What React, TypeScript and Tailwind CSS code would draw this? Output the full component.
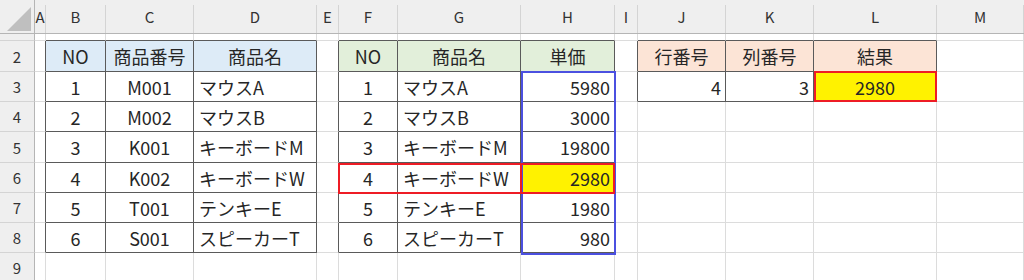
const COLS = ["A", "B", "C", "D", "E", "F", "G", "H", "I", "J", "K", "L", "M"]
const ROWS = [1, 2, 3, 4, 5, 6, 7, 8, 9]

// sheet contents keyed by cell address
const CELLS: Record<string, string> = {
  B2: "NO", C2: "商品番号", D2: "商品名", F2: "NO", G2: "商品名", H2: "単価", J2: "行番号", K2: "列番号", L2: "結果",
  B3: "1", C3: "M001", D3: "マウスA", F3: "1", G3: "マウスA", H3: "5980", J3: "4", K3: "3", L3: "2980",
  B4: "2", C4: "M002", D4: "マウスB", F4: "2", G4: "マウスB", H4: "3000",
  B5: "3", C5: "K001", D5: "キーボードM", F5: "3", G5: "キーボードM", H5: "19800",
  B6: "4", C6: "K002", D6: "キーボードW", F6: "4", G6: "キーボードW", H6: "2980",
  B7: "5", C7: "T001", D7: "テンキーE", F7: "5", G7: "テンキーE", H7: "1980",
  B8: "6", C8: "S001", D8: "スピーカーT", F8: "6", G8: "スピーカーT", H8: "980",
}

const TABLES = [
  { c0: "B", c1: "D", r0: 2, r1: 8 },
  { c0: "F", c1: "H", r0: 2, r1: 8 },
  { c0: "J", c1: "L", r0: 2, r1: 3 },
]

const inTable = (col: string, row: number) => {
  const ci = COLS.indexOf(col)
  return TABLES.some(
    (t) => ci >= COLS.indexOf(t.c0) && ci <= COLS.indexOf(t.c1) && row >= t.r0 && row <= t.r1
  )
}

const fillFor = (col: string, row: number) => {
  if (row === 2 && "BCD".includes(col)) return "bg-[#ddebf7]"
  if (row === 2 && "FGH".includes(col)) return "bg-[#e2efda]"
  if (row === 2 && "JKL".includes(col)) return "bg-[#fce4d6]"
  if ((col === "H" && row === 6) || (col === "L" && row === 3)) return "bg-[#fff200]"
  return "bg-white"
}

const alignFor = (col: string, row: number) => {
  if (row === 2 || "BCFL".includes(col)) return "justify-center"
  if ("DG".includes(col)) return "justify-start pl-[5px]"
  return "justify-end pr-[4px]"
}

function Cell({ col, row }: { col: string; row: number }) {
  const ci = COLS.indexOf(col)
  const next = COLS[ci + 1]
  const darkRight = inTable(col, row) || (next ? inTable(next, row) : false)
  const darkBottom = inTable(col, row) || inTable(col, row + 1)
  const text = CELLS[`${col}${row}`]

  return (
    <div
      className={`flex items-center overflow-hidden whitespace-nowrap border-r border-b ${
        darkRight ? "border-r-[#5a5a5a]" : "border-r-[#dcdcdc]"
      } ${darkBottom ? "border-b-[#5a5a5a]" : "border-b-[#dcdcdc]"} ${fillFor(col, row)} ${alignFor(col, row)}`}
    >
      {text && <span className="text-[18px] leading-none text-[#262626]">{text}</span>}
    </div>
  )
}

export default function App() {
  return (
    <div className="relative h-[280px] w-[1024px] overflow-hidden bg-white font-['Noto_Sans_CJK_JP',sans-serif]">
      <div className="grid h-full grid-cols-[35px_11px_60px_88px_123px_22px_59px_123px_94px_23px_88px_88px_123px_1fr] grid-rows-[34px_7px_31px_30px_30px_31px_30px_30px_30px_30px]">
        {/* corner */}
        <div className="flex items-end justify-end border-r border-b border-[#b5b5b5] bg-[#efefef] pr-[3px] pb-[2px]">
          <svg width="24" height="24" viewBox="0 0 24 24">
            <polygon points="24,0 24,24 0,24" fill="#bfbfbf" />
          </svg>
        </div>

        {/* column letters */}
        {COLS.map((c) => (
          <div key={c} className="flex flex-col border-b border-[#b5b5b5] bg-[#efefef]">
            <div className="mt-[5px] flex flex-1 items-center justify-center overflow-hidden border-r border-[#d4d4d4] pb-[6px] text-[15px] leading-none text-[#333]">
              {c}
            </div>
          </div>
        ))}

        {ROWS.map((r) => (
          <div key={r} className="contents">
            <div className="flex items-center justify-center border-r border-b border-r-[#b5b5b5] border-b-[#d4d4d4] bg-[#efefef] text-[15px] leading-none text-[#333]">
              {r === 1 ? "" : r}
            </div>
            {COLS.map((c) =>
              r === 1 ? (
                <div
                  key={c}
                  className={`border-r border-b border-r-[#dcdcdc] ${
                    inTable(c, 2) ? "border-b-[#5a5a5a]" : "border-b-[#dcdcdc]"
                  } bg-white`}
                />
              ) : (
                <Cell key={c} col={c} row={r} />
              )
            )}
          </div>
        ))}
      </div>

      {/* selection style outlines over the sheet */}
      <div className="pointer-events-none absolute left-[521px] top-[71px] h-[184px] w-[95px] border-2 border-[#4b50e0]" />
      <div className="pointer-events-none absolute left-[338px] top-[163px] h-[31px] w-[277px] border-2 border-[#ee1c25]" />
      <div className="pointer-events-none absolute left-[520px] top-[163px] h-[31px] w-[2px] bg-[#ee1c25]" />
      <div className="pointer-events-none absolute left-[814px] top-[71px] h-[31px] w-[123px] border-2 border-[#ee1c25]" />
    </div>
  )
}
